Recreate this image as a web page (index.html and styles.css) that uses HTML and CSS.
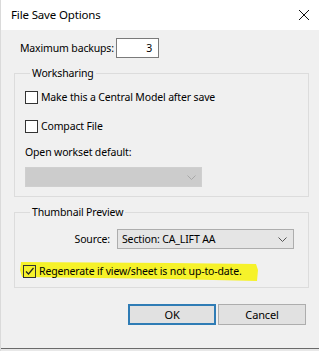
FILE: index.html
```html
<!DOCTYPE html>
<html>
<head>
<meta charset="utf-8">
<link rel="stylesheet" href="styles.css">
</head>
<body>
<div class="window">
  <div class="titlebar">
    <span class="title">File Save Options</span>
    <svg class="close" width="12" height="12" viewBox="0 0 12 12"><path d="M1 1 L11 11 M11 1 L1 11" stroke="#111" stroke-width="1"/></svg>
  </div>
  <div class="content">
    <div class="backups">
      <span class="lbl">Maximum backups:</span>
      <div class="numbox">3</div>
    </div>
    <fieldset class="group g1">
      <legend>Worksharing</legend>
      <div class="check-row r1"><span class="cb"></span><span>Make this a Central Model after save</span></div>
      <div class="check-row r2"><span class="cb"></span><span>Compact File</span></div>
      <div class="label-row">Open workset default:</div>
      <div class="combo disabled">
        <svg class="chev" width="9" height="5" viewBox="0 0 9 5"><path d="M0.5 0.5 L4.5 4.5 L8.5 0.5" fill="none" stroke="#a8a8a8" stroke-width="1"/></svg>
      </div>
    </fieldset>
    <fieldset class="group g2">
      <legend>Thumbnail Preview</legend>
      <div class="source-row">
        <span>Source:</span>
        <div class="combo source">
          <span>Section: CA_LIFT AA</span>
          <svg class="chev" width="9" height="5" viewBox="0 0 9 5"><path d="M0.5 0.5 L4.5 4.5 L8.5 0.5" fill="none" stroke="#555" stroke-width="1"/></svg>
        </div>
      </div>
      <div class="check-row r3">
        <svg class="highlight" width="240" height="24" viewBox="0 0 240 24"><path d="M1 2 L150 3 L236 4 L238 10 L237 21 L150 19 L2 17 L0 10 Z" fill="#f6f22a"/></svg>
        <span class="cb checked"><svg width="11" height="11" viewBox="0 0 11 11"><path d="M2 5.5 L4.5 8 L9.5 2" fill="none" stroke="#222" stroke-width="1.2"/></svg></span>
        <span class="txt">Regenerate if view/sheet is not up-to-date.</span>
      </div>
    </fieldset>
    <div class="buttons">
      <button class="btn ok">OK</button>
      <button class="btn">Cancel</button>
    </div>
  </div>
  <div class="bottom-edge"></div>
</div>
</body>
</html>
```
FILE: styles.css
```css
* { box-sizing: border-box; }
html, body { margin: 0; padding: 0; }
body {
  width: 319px;
  height: 351px;
  overflow: hidden;
  font-family: "Noto Sans", "Open Sans", sans-serif;
  font-size: 10.5px;
  letter-spacing: -0.15px;
  color: #000;
  background: #f0f0f0;
}
.window {
  width: 319px;
  height: 351px;
  background: #f0f0f0;
  border-left: 1px solid #dadada;
  display: flex;
  flex-direction: column;
}
.titlebar {
  height: 30px;
  background: #fff;
  display: flex;
  align-items: center;
  justify-content: space-between;
  padding: 0 9px 0 10px;
  font-size: 11.5px;
}
.title { line-height: 16px; }
.close { display: block; margin-top: -1px; }
.content {
  padding: 8px 10px 0 13px;
  display: flex;
  flex-direction: column;
}
.backups {
  display: flex;
  align-items: center;
  height: 20px;
  padding-left: 6px;
}
.backups .lbl { width: 96px; flex: none; white-space: nowrap; line-height: 16px; }
.numbox {
  width: 43px;
  height: 20px;
  background: #fff;
  border: 1px solid #7a7a7a;
  text-align: right;
  padding-right: 6px;
  line-height: 18px;
}
.group {
  margin: 7px 0 0 0;
  padding: 0 14px 0 10px;
  border: 1px solid #dcdcdc;
  width: 295px;
  min-width: 0;
}
.group legend {
  padding: 0 2px;
  margin-left: 5px;
  line-height: 16px;
}
.check-row {
  display: flex;
  align-items: center;
  height: 16px;
  line-height: 16px;
  position: relative;
  white-space: nowrap;
}
.check-row.r1 { margin-top: 8px; }
.check-row.r2 { margin-top: 13px; }
.cb {
  width: 13px;
  height: 13px;
  border: 1px solid #333;
  background: #fff;
  margin-right: 3px;
  flex: none;
  position: relative;
  display: flex;
  align-items: center;
  justify-content: center;
}
.label-row { margin-top: 10px; line-height: 16px; }
.combo {
  height: 20px;
  display: flex;
  align-items: center;
  justify-content: space-between;
  position: relative;
}
.combo.disabled {
  margin-top: 7px;
  width: 177px;
  background: #cccccc;
  border: 1px solid #cfcfcf;
  justify-content: flex-end;
  padding-right: 5px;
  margin-bottom: 9px;
}
.source-row {
  display: flex;
  justify-content: flex-end;
  align-items: center;
  gap: 7px;
  margin-top: 9px;
}
.combo.source {
  width: 177px;
  background: #e5e5e5;
  border: 1px solid #adadad;
  padding: 0 6px 0 4px;
}
.check-row.r3 {
  margin-top: 14px;
  margin-left: -2px;
  margin-bottom: 8px;
}
.highlight {
  position: absolute;
  left: -3px;
  top: -3px;
  z-index: 0;
}
.r3 .cb, .r3 .txt { position: relative; z-index: 1; }
.r3 .cb { background: transparent; margin-right: 3px; }
.buttons {
  display: flex;
  justify-content: flex-end;
  gap: 2px;
  margin-top: 16px;
  padding-right: 3px;
}
.btn {
  width: 88px;
  height: 21px;
  font-family: inherit;
  font-size: 11px;
  letter-spacing: -0.15px;
  background: #e1e1e1;
  border: 1px solid #adadad;
  padding: 0;
  color: #000;
}
.btn.ok {
  border: 2px solid #2f7cb5;
}
.bottom-edge {
  margin-top: auto;
  height: 3px;
  border-top: 1px solid #6a6a6a;
  background: #e8e8e8;
}
```
